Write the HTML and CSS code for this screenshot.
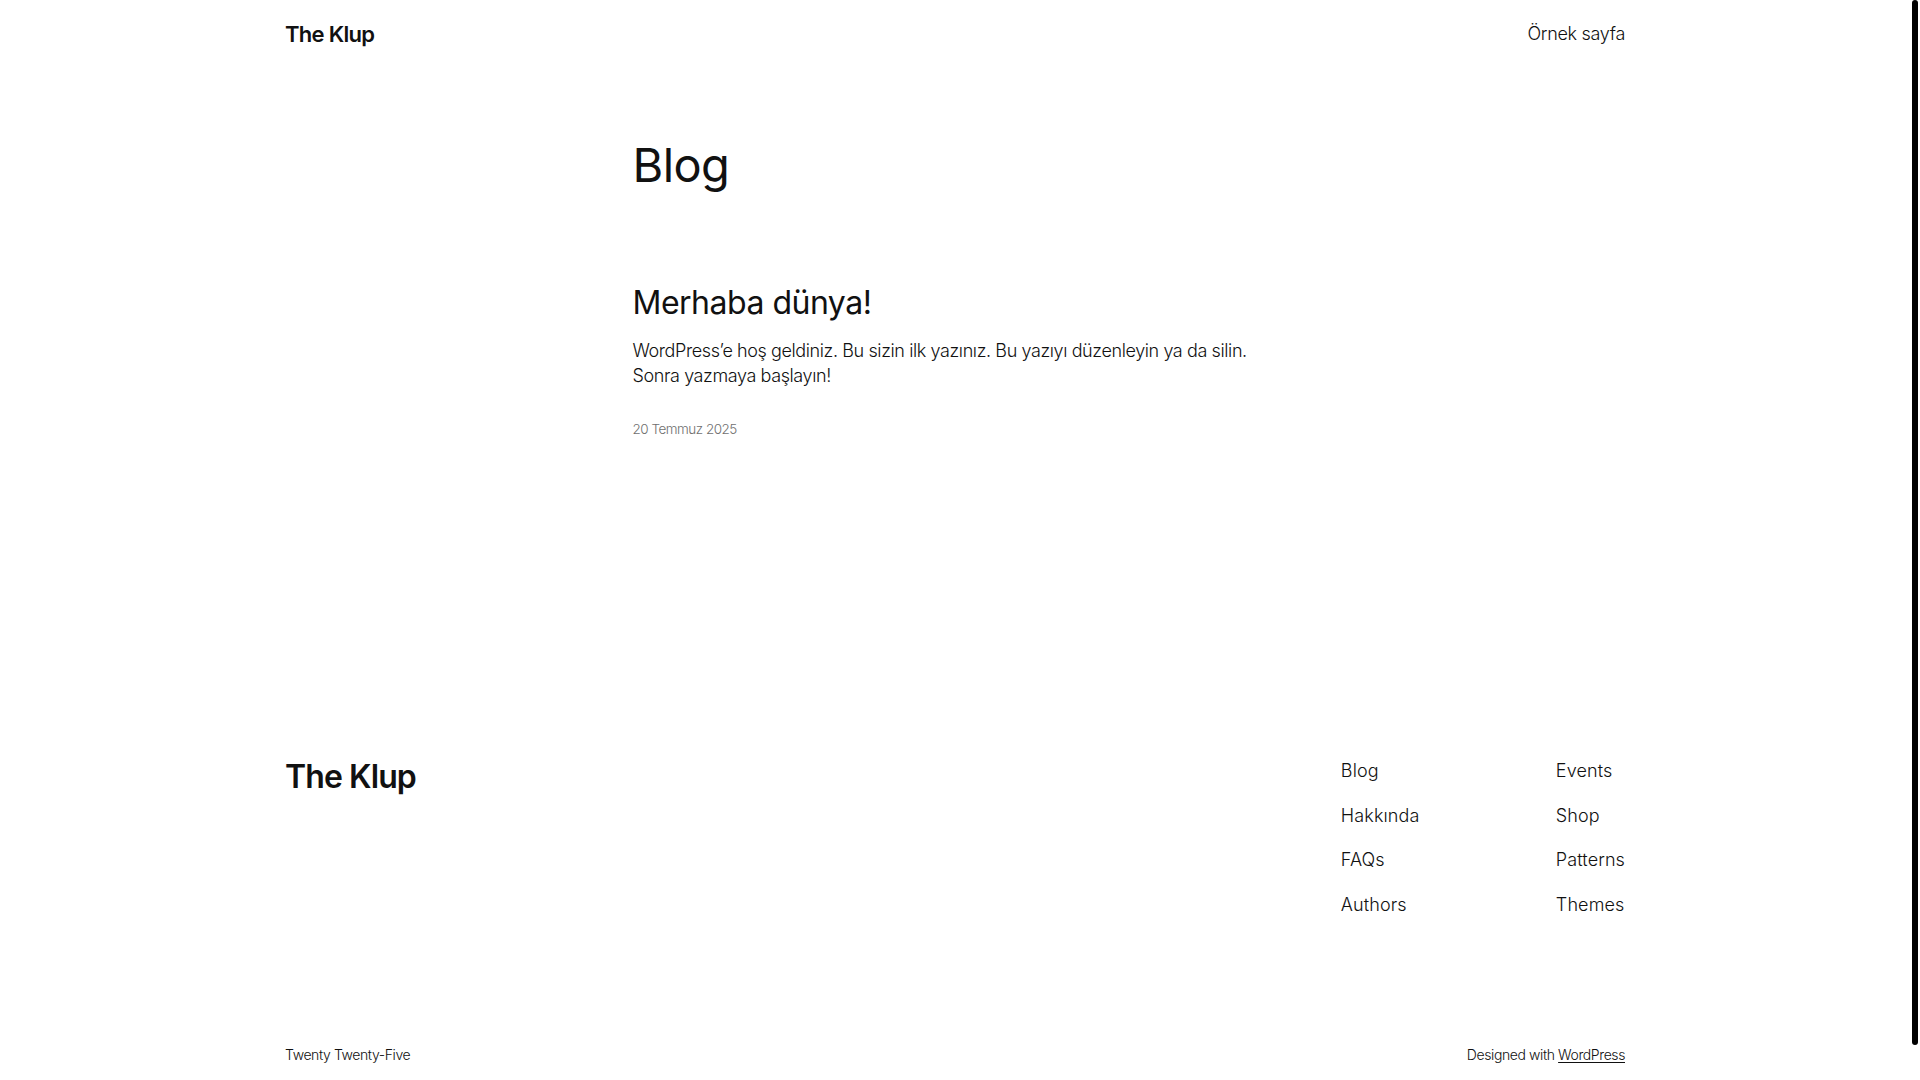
FILE: index.html
```html
<!DOCTYPE html>
<html lang="tr">
<head>
    <meta charset="UTF-8">
    <meta name="viewport" content="width=device-width, initial-scale=1.0">
    <title>Blog – The Klup</title>
    <link rel="stylesheet" href="styles.css">
</head>
<body>

    <header class="site-header">
        <div class="wide header-row">
            <a class="site-title" href="#">The Klup</a>
            <nav class="header-nav">
                <a href="#">Örnek sayfa</a>
            </nav>
        </div>
    </header>

    <main class="site-main">
        <div class="content">
            <h1 class="page-title">Blog</h1>
            <article class="post">
                <h2 class="post-title"><a href="#">Merhaba dünya!</a></h2>
                <p class="post-excerpt">WordPress’e hoş geldiniz. Bu sizin ilk yazınız. Bu yazıyı düzenleyin ya da silin. Sonra yazmaya başlayın!</p>
                <time class="post-date" datetime="2025-07-20">20 Temmuz 2025</time>
            </article>
        </div>
    </main>

    <footer class="site-footer">
        <div class="wide">
            <div class="footer-top">
                <a class="footer-title" href="#">The Klup</a>
                <div class="footer-navs">
                    <ul class="footer-menu">
                        <li><a href="#">Blog</a></li>
                        <li><a href="#">Hakkında</a></li>
                        <li><a href="#">FAQs</a></li>
                        <li><a href="#">Authors</a></li>
                    </ul>
                    <ul class="footer-menu">
                        <li><a href="#">Events</a></li>
                        <li><a href="#">Shop</a></li>
                        <li><a href="#">Patterns</a></li>
                        <li><a href="#">Themes</a></li>
                    </ul>
                </div>
            </div>
            <div class="footer-bottom">
                <p>Twenty Twenty-Five</p>
                <p>Designed with <a class="credit-link" href="#">WordPress</a></p>
            </div>
        </div>
    </footer>

    <div class="scroll-thumb"></div>

</body>
</html>
```

FILE: styles.css
```css
body {
    margin: 0 10px 0 0;
    font-family: Inter, "Noto Sans", sans-serif;
    font-weight: 300;
    font-size: 18px;
    line-height: 1.4;
    letter-spacing: -0.4px;
    color: #111;
    background: #fff;
}

a {
    color: inherit;
    text-decoration: none;
}

/* page scrollbar thumb, drawn over the right edge */
.scroll-thumb {
    position: fixed;
    top: 0;
    right: 2px;
    width: 6px;
    height: 1045px;
    background: #000;
    border-radius: 3px;
}

.wide {
    max-width: 1340px;
    margin: 0 auto;
}

.content {
    max-width: 645px;
    margin: 0 auto;
}

/* header */

.header-row {
    height: 68px;
    display: flex;
    align-items: center;
    justify-content: space-between;
}

.site-title {
    font-size: 22px;
    font-weight: 600;
    letter-spacing: -0.7px;
}

.header-nav a {
    font-size: 18px;
    letter-spacing: -0.3px;
}

/* main */

.page-title {
    margin: 68px 0 0;
    font-size: 47px;
    font-weight: 400;
    line-height: 1.25;
    letter-spacing: -0.6px;
}

.post {
    margin-top: 89px;
}

.post-title {
    margin: 0;
    font-size: 32px;
    font-weight: 400;
    line-height: 1.2;
    letter-spacing: -0.5px;
}

.post-excerpt {
    margin: 16px 0 0;
    max-width: 620px;
}

.post-date {
    display: block;
    margin-top: 31px;
    font-size: 13.5px;
    letter-spacing: -0.5px;
    color: #6f6f6f;
}

/* footer */

.site-footer {
    padding: 320px 0 52px;
}

.footer-top {
    display: flex;
    justify-content: space-between;
    align-items: flex-start;
}

.footer-title {
    font-size: 32px;
    font-weight: 600;
    line-height: 1.2;
    letter-spacing: -0.9px;
}

.footer-navs {
    display: flex;
}

.footer-menu {
    list-style: none;
    margin: 0;
    padding: 0;
    display: flex;
    flex-direction: column;
    gap: 19.3px;
    letter-spacing: 0.1px;
}

.footer-menu:first-child {
    width: 215px;
}

.footer-bottom {
    margin-top: 128px;
    display: flex;
    justify-content: space-between;
    font-size: 14px;
    letter-spacing: -0.4px;
}

.footer-bottom p {
    margin: 0;
}

.credit-link {
    text-decoration: underline;
    text-underline-offset: 2px;
}
```
